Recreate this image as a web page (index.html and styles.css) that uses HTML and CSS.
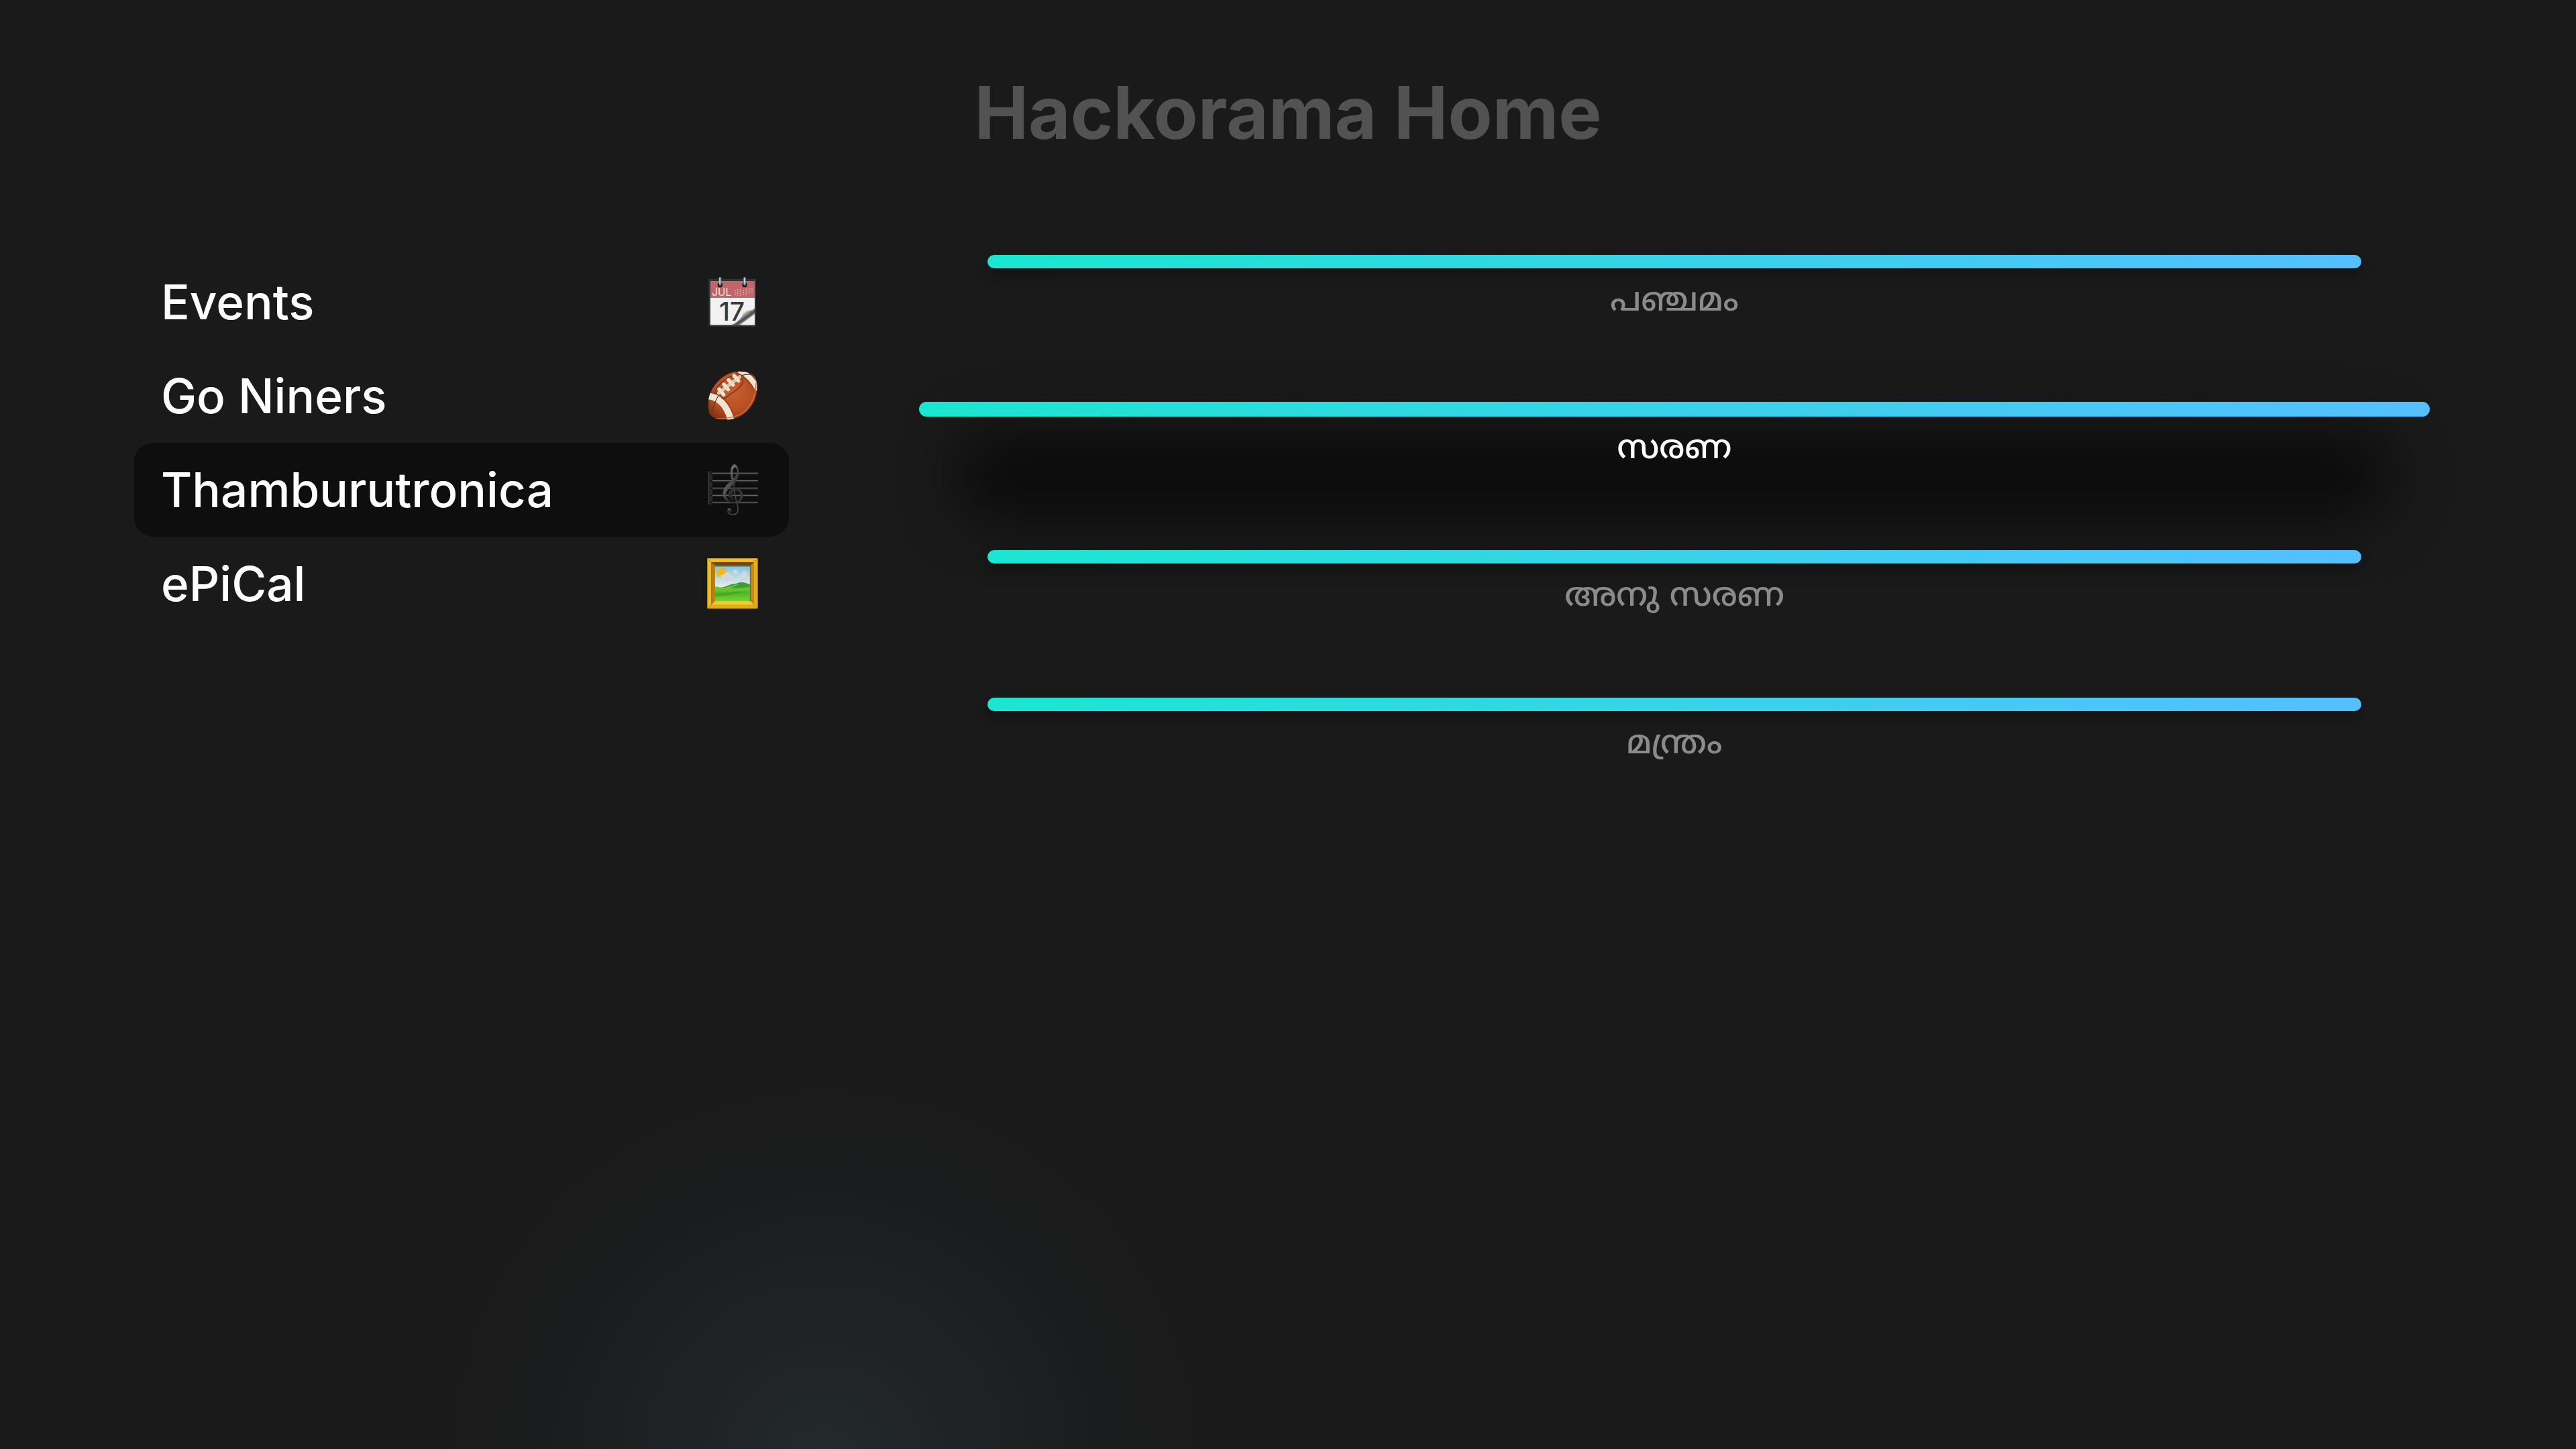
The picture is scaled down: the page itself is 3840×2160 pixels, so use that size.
FILE: index.html
```html
<!DOCTYPE html>
<html lang="en">
<head>
<meta charset="utf-8">
<meta name="viewport" content="width=device-width, initial-scale=1">
<title>Hackorama Home</title>
<link rel="stylesheet" href="styles.css">
</head>
<body>
<div class="screen">
  <h1 class="title">Hackorama Home</h1>
  <main class="content">
    <nav class="menu" aria-label="Apps">
      <button class="menu-item" type="button">
        <span>Events</span>
        <svg class="icon" viewBox="72 30 240 240" aria-hidden="true">
          <defs>
            <linearGradient id="curl" x1="0" y1="0" x2="1" y2="1"><stop offset=".38" stop-color="#efefef"/><stop offset=".5" stop-color="#8d8d8d"/><stop offset=".6" stop-color="#484848"/><stop offset=".76" stop-color="#e3e3e3"/></linearGradient>
          </defs>
          <rect x="79" y="47" width="212" height="213" rx="4" fill="#303434"/>
          <rect x="87" y="57" width="198" height="76" fill="#c0656a"/>
          <rect x="87" y="132" width="198" height="121" fill="#f2f2f2"/>
          <text class="month" x="94" y="122">JUL</text>
          <g stroke="#e0a5a7" stroke-width="5" stroke-dasharray="5 4"><path d="M199 97v27M209 93v30M221 93v30M235 97v24M247 90v30M260 90v27M273 88v27"/></g>
          <text class="day" x="126" y="234">17</text>
          <path d="M285 178C271 195 254 184 234 190C236 216 210 242 180 253H285Z" fill="url(#curl)"/>
          <path d="M285 205L220 253H285Z" fill="#efefef"/>
          <circle cx="130" cy="74" r="11" fill="#151719"/><circle cx="240" cy="74" r="11" fill="#151719"/>
          <path d="M130 44V72M240 44V72" stroke="#78868f" stroke-width="11" stroke-linecap="round"/>
          <path d="M129 45V67M239 45V67" stroke="#d9e3e8" stroke-width="4" stroke-linecap="round"/>
        </svg>
      </button>
      <button class="menu-item" type="button">
        <span>Go Niners</span>
        <svg class="icon" viewBox="72 30 240 240" aria-hidden="true">
          <defs>
            <radialGradient id="leather" cx=".5" cy=".42" r=".6"><stop offset="0" stop-color="#c9602f"/><stop offset=".65" stop-color="#b64f23"/><stop offset="1" stop-color="#87340f"/></radialGradient>
            <clipPath id="ball"><path d="M93 242C79 231 75 205 78 175C80 142 97 108 126 80C153 54 187 40 216 41C250 42 282 51 290 73C299 98 297 134 287 163C273 204 240 235 204 249C168 262 116 258 93 242Z"/></clipPath>
          </defs>
          <g clip-path="url(#ball)">
            <rect x="72" y="36" width="230" height="226" fill="url(#leather)"/>
            <path d="M70 145C120 145 164 190 181 270" fill="none" stroke="#a04019" stroke-width="38"/>
            <path d="M70 151C120 151 164 190 181 270" fill="none" stroke="#eee5d4" stroke-width="29"/>
            <path d="M204 35C242 50 279 78 304 134" fill="none" stroke="#a04019" stroke-width="33"/>
            <path d="M214 35C246 50 279 78 300 124" fill="none" stroke="#eee5d4" stroke-width="23"/>
            <path d="M91 244C97 198 114 162 128 141M215 65C228 56 254 51 280 57" fill="none" stroke="#5b3a30" stroke-width="4"/>
            <path d="M104 252C158 251 214 250 250 208C283 171 291 130 291 91" fill="none" stroke="#d77339" stroke-width="4"/>
          </g>
          <path d="M120 142C101 140 109 120 123 105C144 79 177 61 198 58M137 160C148 166 160 157 173 144C196 131 216 116 228 97C235 88 235 77 226 72" fill="none" stroke="#66361f" stroke-width="4"/>
          <path d="M124 138L218 65" stroke="#d5cbb7" stroke-width="15" stroke-linecap="round"/>
          <path d="M126 120L146 145M147 99L166 122M168 79L188 101M193 60L212 83" stroke="#eee4d1" stroke-width="16" stroke-linecap="round"/>
          <path d="M124 138L218 65" stroke="#b9ab95" stroke-width="3" stroke-dasharray="5 9"/>
        </svg>
      </button>
      <button class="menu-item menu-item-selected" type="button" aria-current="page">
        <span>Thamburutronica</span>
        <svg class="icon" viewBox="72 60 240 240" aria-hidden="true">
          <defs><linearGradient id="clef" x1="0" y1="0" x2="1" y2="1"><stop offset="0" stop-color="#aaa"/><stop offset=".4" stop-color="#555"/><stop offset=".62" stop-color="#262728"/><stop offset="1" stop-color="#414345"/></linearGradient></defs>
          <path d="M90 107H300M90 141H300M90 174H300M90 206H300M90 237H300" stroke="#252627" stroke-width="9"/>
          <path d="M90 106H300M90 140H300M90 173H300M90 205H300M90 236H300" stroke="#626364" stroke-width="4"/>
          <rect x="76" y="98" width="20" height="148" rx="2" fill="#29292a"/><path d="M79 100V244" stroke="#3a3b3c" stroke-width="3"/>
          <g fill="#111"><circle cx="91" cy="107" r="4"/><circle cx="91" cy="141" r="4"/><circle cx="91" cy="174" r="4"/><circle cx="91" cy="206" r="4"/><circle cx="91" cy="237" r="4"/></g>
          <path d="M191 171C184 145 174 115 178 91C181 75 188 66 195 66C207 69 214 85 214 105C213 130 199 151 180 166C163 180 156 192 157 206C159 222 175 234 194 234C211 234 222 223 222 207C222 193 213 186 202 186C190 187 183 196 184 207C184 215 188 222 195 227C177 225 168 215 168 202C168 187 181 174 200 174C220 174 232 187 232 207C231 226 218 238 194 239C162 239 143 221 143 197C144 173 163 155 178 142C194 127 207 113 207 96C206 87 202 81 198 81C188 82 184 96 186 108C188 130 197 151 197 169Z" fill="url(#clef)"/>
          <path d="M192 173L201 222C207 242 213 264 209 277C205 290 188 295 176 289C165 284 162 276 166 269" fill="none" stroke="#3d3f40" stroke-width="6" stroke-linecap="round"/>
          <circle cx="172" cy="272" r="11" fill="#292a2b"/><circle cx="170" cy="268" r="4" fill="#666"/>
        </svg>
      </button>
      <button class="menu-item" type="button">
        <span>ePiCal</span>
        <svg class="icon" viewBox="72 45 240 240" aria-hidden="true">
          <defs>
            <linearGradient id="sky" x1="0" y1="0" x2="0" y2="1"><stop offset="0" stop-color="#80c9df"/><stop offset=".6" stop-color="#e7eee8"/></linearGradient>
            <linearGradient id="grass" x1="0" y1="0" x2="0" y2="1"><stop offset="0" stop-color="#75c934"/><stop offset=".5" stop-color="#55b92b"/><stop offset="1" stop-color="#76d72c"/></linearGradient>
          </defs>
          <path d="M73 52H299L282 69H91Z" fill="#edbd23"/><path d="M299 52V277L282 261V69Z" fill="#e4ac20"/>
          <path d="M73 277H299L282 260H91Z" fill="#e4ad1b"/><path d="M73 52V277L91 260V69Z" fill="#edbb23"/>
          <path d="M91 69H282V260H91Z" fill="#c68b0e"/><path d="M91 69H282L267 84H106Z" fill="#704a0e"/>
          <path d="M91 260H282L267 244H106Z" fill="#f5cd26"/><path d="M91 69L106 84V244L91 260Z" fill="#b77b10"/>
          <rect x="108" y="87" width="157" height="157" fill="url(#sky)"/>
          <circle cx="136" cy="117" r="21" fill="none" stroke="#f0b728" stroke-width="7" stroke-dasharray="7 4"/><circle cx="136" cy="117" r="18" fill="#f5b912"/>
          <g fill="#d4d6df"><ellipse cx="159" cy="144" rx="27" ry="9"/><circle cx="162" cy="127" r="14"/><circle cx="144" cy="136" r="12"/><circle cx="177" cy="136" r="10"/><ellipse cx="199" cy="118" rx="13" ry="4"/><circle cx="199" cy="109" r="8"/><ellipse cx="239" cy="138" rx="25" ry="8"/><circle cx="240" cy="122" r="13"/><circle cx="225" cy="133" r="11"/></g>
          <path d="M108 184C149 188 170 165 202 165C222 155 241 158 265 170V220H108Z" fill="#409e31"/>
          <path d="M108 178C158 186 205 191 265 179V244H108Z" fill="url(#grass)"/>
          <path d="M108 206C156 211 205 191 265 204C217 202 175 221 108 221Z" fill="#45a925"/>
          <path d="M151 183C180 177 197 171 213 165C202 178 179 181 169 186Z" fill="#79c54b"/>
          <path d="M108 87H265V244" fill="none" stroke="#46645e" stroke-width="3"/>
        </svg>
      </button>
    </nav>
    <section class="tracks" aria-label="Tracks" lang="ml">
      <button class="track" type="button"><span class="bar"></span><span class="label">പഞ്ചമം</span></button>
      <button class="track track-focused" type="button"><span class="bar"></span><span class="label">സരണ</span></button>
      <button class="track" type="button"><span class="bar"></span><span class="label">അനു സരണ</span></button>
      <button class="track" type="button"><span class="bar"></span><span class="label">മന്ത്രം</span></button>
    </section>
  </main>
</div>
</body>
</html>
```

FILE: styles.css
```css
* {
  box-sizing: border-box;
}

body {
  margin: 0;
  background: #1a1a1a;
  color: #fff;
  font-family: Inter, "Liberation Sans", sans-serif;
}

.screen {
  min-height: 100vh;
  padding: 98px 0 80px;
  background: radial-gradient(circle 560px at 32% 101%, #24292c 0%, #212528 25%, #1e2022 50%, #1b1c1d 75%, #1a1a1a 100%);
}

.title {
  margin: 0;
  font-size: 108px;
  line-height: 140px;
  font-weight: 700;
  text-align: center;
  color: #525252;
}

.content {
  position: relative;
  z-index: 0;
  display: grid;
  grid-template-columns: 976fr 2048fr;
  column-gap: 296px;
  align-items: start;
  padding: 142px 320px 0 200px;
}

button {
  border: 0;
  padding: 0;
  background: none;
  color: inherit;
  font: inherit;
}

.menu {
  display: flex;
  flex-direction: column;
}

.menu-item {
  display: flex;
  align-items: center;
  justify-content: space-between;
  height: 140px;
  padding: 0 42px 0 40px;
  border-radius: 28px;
  font-size: 71px;
  line-height: 90px;
  font-weight: 500;
}

.menu-item-selected {
  background: #0e0e0e;
}

.icon {
  flex: none;
  width: 80px;
  height: 80px;
}

.month {
  font: 400 46px Inter, sans-serif;
  fill: #f8e8e8;
}

.day {
  font: 500 116px Inter, sans-serif;
  fill: #373b3e;
}

.tracks {
  display: flex;
  flex-direction: column;
  gap: 100px;
}

.track {
  position: relative;
  display: flex;
  flex-direction: column;
  align-items: center;
  gap: 20px;
  height: 120px;
  color: #8b8b8b;
}

.bar {
  width: 100%;
  height: 20px;
  flex: none;
  border-radius: 10px;
  background: linear-gradient(90deg, #1ae6d0, #54bfff);
  box-shadow: 0 10px 20px rgba(0, 0, 0, 0.3);
}

.label {
  font-family: "Noto Sans Malayalam", "Noto Sans", sans-serif;
  font-size: 50px;
  line-height: 62px;
  font-weight: 500;
}

.track-focused {
  color: #fff;
}

.track-focused .bar {
  width: 110%;
  height: 22px;
  margin: -1px 0;
  border-radius: 11px;
  box-shadow: none;
}

/* Soft shadow cast by the lifted card */
.track-focused::before {
  content: "";
  position: absolute;
  inset: 42px -2% -56px;
  z-index: -1;
  border-radius: 40px;
  background: rgba(0, 0, 0, 0.56);
  filter: blur(44px);
}
```
